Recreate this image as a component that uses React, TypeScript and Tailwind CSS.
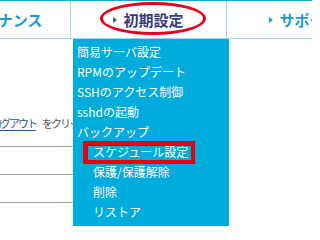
import React from 'react';

const jp = { fontFamily: '"Noto Sans CJK JP", "Liberation Sans", sans-serif' };

const menu = [
  { label: '簡易サーバ設定', sub: false },
  { label: 'RPMのアップデート', sub: false },
  { label: 'SSHのアクセス制御', sub: false },
  { label: 'sshdの起動', sub: false },
  { label: 'バックアップ', sub: false },
  { label: 'スケジュール設定', sub: true },
  { label: '保護/保護解除', sub: true },
  { label: '削除', sub: true },
  { label: 'リストア', sub: true },
];

function Tab({ label, active }: { label: string; active?: boolean }) {
  return (
    <div className="w-[156px] shrink-0 flex items-center justify-center gap-[6px] border-r border-[#9fd3e6]">
      <span
        className={
          'w-0 h-0 border-y-[3px] border-y-transparent border-l-[4px] ' +
          (active ? 'border-l-[#4a5488]' : 'border-l-[#1b9ad6]')
        }
      />
      <span className={'text-[15px] font-bold leading-none ' + (active ? 'text-[#343d7e]' : 'text-[#1b9ad6]')}>
        {label}
      </span>
    </div>
  );
}

export default function App() {
  return (
    <div className="relative w-[312px] h-[226px] overflow-hidden bg-white" style={jp}>
      <div className="h-[39px] border-t border-[#1ba6dc] border-b border-b-[#9fd3e6] flex ml-[-85px]">
        <Tab label="メンテナンス" />
        <Tab label="初期設定" active />
        <Tab label="サポート" />
      </div>

      <div className="pt-[76px] whitespace-nowrap">
        <div className="ml-[-9px] h-[16px] text-[11px] leading-[16px] tracking-[-2px] text-[#555]">
          <span className="text-[#1d5f9e] underline underline-offset-2">ログアウト</span>
          <span className="ml-[6px]">をクリックしてください。</span>
        </div>
        <div className="mt-[15px] w-[110px] flex flex-col gap-[27px]">
          <div className="h-px bg-[#a0a0a0]" />
          <div className="h-px bg-[#a0a0a0]" />
          <div className="h-px bg-[#a0a0a0]" />
        </div>
      </div>

      <div className="absolute left-[73px] top-[39px] w-[156px] h-[190px] bg-[#00acdc] pt-[3px] text-white text-[12px] leading-[20px]">
        {menu.map((m) => (
          <div key={m.label} className={m.sub ? 'pl-[20px]' : 'pl-[4px]'}>
            {m.label}
          </div>
        ))}
      </div>

      <div className="absolute left-[100px] top-[2px] w-[106px] h-[33px] rounded-[50%] border-[3px] border-[#e8001c]" />
      <div className="absolute left-[83px] top-[141px] w-[112px] h-[23px] border-[4px] border-[#e60012] shadow-[inset_1px_1px_0_#8a2434]" />
    </div>
  );
}
